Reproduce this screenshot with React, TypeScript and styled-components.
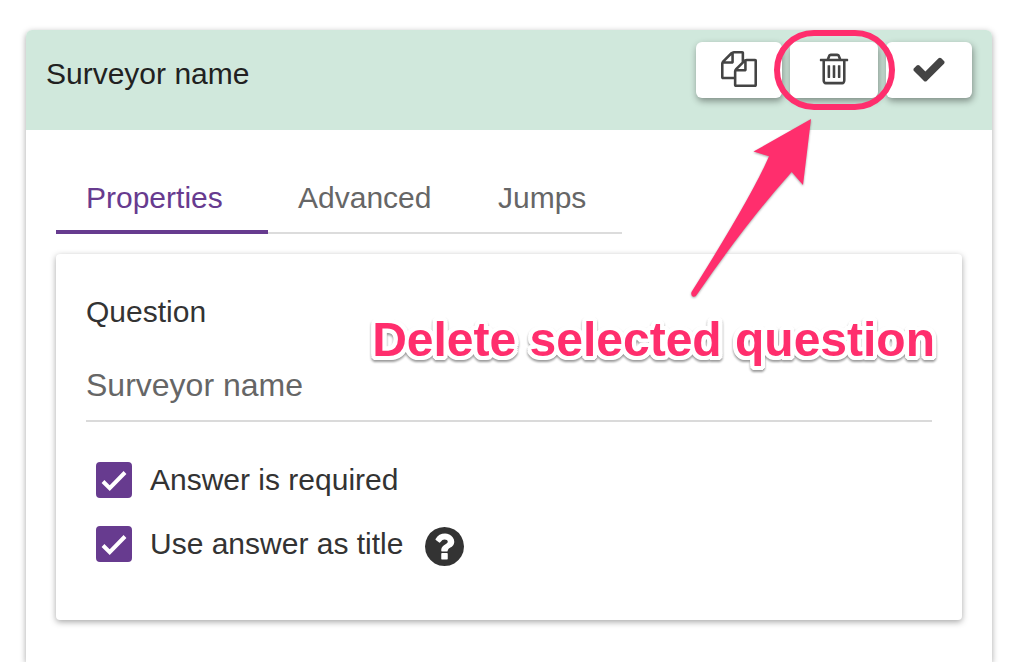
import React, { useState } from 'react';
import styled, { createGlobalStyle } from 'styled-components';

const PURPLE = '#673b8f';
const PINK = '#ff2e6d';

/* White rim with rounded corners, made of shadows spread evenly on a circle. */
const RIM = [
  '4px 0', '-4px 0', '0 4px', '0 -4px',
  '3px 3px', '-3px 3px', '3px -3px', '-3px -3px',
  '4px 2px', '-4px 2px', '4px -2px', '-4px -2px',
  '2px 4px', '-2px 4px', '2px -4px', '-2px -4px',
  '2px 0', '-2px 0', '0 2px', '0 -2px',
]
  .map((offset) => `${offset} 0 #fff`)
  .join(', ');

const GlobalStyle = createGlobalStyle`
  *, *::before, *::after { box-sizing: border-box; }
  body {
    margin: 0;
    background: #fff;
    color: #333;
    font: 30px/36px "Liberation Sans", Arial, sans-serif;
  }
`;

const Page = styled.main`
  display: flex;
  min-height: 100vh;
  padding: 30px 24px 0 26px;
`;

const Card = styled.article`
  position: relative;
  flex: 1;
  min-width: 0;
  border-radius: 6px 6px 0 0;
  background: #fff;
  box-shadow: 0 2px 6px rgba(0, 0, 0, 0.35);
`;

const CardHeader = styled.header`
  display: flex;
  justify-content: space-between;
  align-items: flex-start;
  min-height: 100px;
  padding: 12px 20px;
  border-radius: 6px 6px 0 0;
  background: #d0e8dc;
`;

const Title = styled.h1`
  margin: 14px 0 0;
  color: #212121;
  font-size: 30px;
  line-height: 36px;
  font-weight: 400;
`;

const Toolbar = styled.div`
  display: flex;
  gap: 8px;
`;

const ToolButton = styled.button<{ $wide?: boolean }>`
  display: flex;
  justify-content: center;
  align-items: center;
  width: ${({ $wide }) => ($wide ? 88 : 86)}px;
  height: 56px;
  padding: 0 0 2px;
  border: 0;
  border-radius: 6px;
  background: #fff;
  color: #444;
  box-shadow: 1px 3px 7px rgba(0, 0, 0, 0.4);
  cursor: pointer;
`;

const Icon = styled.svg<{ $size: number }>`
  display: block;
  flex: none;
  width: ${({ $size }) => $size}px;
  height: ${({ $size }) => $size}px;
  fill: currentColor;
`;

const CardBody = styled.div`
  padding: 50px 30px 42px;
`;

const TabList = styled.div`
  display: grid;
  grid-template-columns: 212px 200px 154px;
  width: fit-content;
`;

const Tab = styled.button<{ $active: boolean }>`
  height: 54px;
  padding: 0 0 18px 30px;
  border: 0;
  background: none;
  box-shadow: inset 0 ${({ $active }) => ($active ? `-4px ${PURPLE}` : '-2px #dcdcdc')};
  color: ${({ $active }) => ($active ? PURPLE : '#666')};
  font: inherit;
  text-align: left;
  cursor: pointer;
`;

const Panel = styled.section`
  margin-top: 20px;
  padding: 40px 30px 44px;
  border-radius: 4px;
  background: #fff;
  box-shadow: 0 2px 6px rgba(0, 0, 0, 0.35);
`;

const FieldLabel = styled.label`
  display: block;
`;

const TextField = styled.input`
  display: block;
  width: 100%;
  height: 57px;
  margin: 35px 0 26px;
  padding: 0 0 15px;
  border: 0;
  border-bottom: 2px solid #dadada;
  border-radius: 0;
  outline: 0;
  background: none;
  color: #666;
  font: 32px/40px "Liberation Sans", Arial, sans-serif;
`;

const OptionRow = styled.div`
  display: flex;
  align-items: center;
  height: 64px;
  padding-left: 10px;
`;

const OptionLabel = styled.label`
  display: flex;
  align-items: center;
  gap: 18px;
  cursor: pointer;
`;

const CheckStack = styled.span`
  display: grid;
  width: 36px;
  height: 36px;

  > * {
    grid-area: 1 / 1;
  }
`;

const CheckInput = styled.input`
  appearance: none;
  width: 36px;
  height: 36px;
  margin: 0;
  border: 3px solid ${PURPLE};
  border-radius: 4px;
  cursor: pointer;

  &:checked {
    background: ${PURPLE};
  }
`;

const CheckMark = styled.svg`
  width: 36px;
  height: 36px;
  fill: none;
  stroke: #fff;
  stroke-width: 4;
  pointer-events: none;
`;

const HelpButton = styled.button`
  margin: 4px 0 0 22px;
  padding: 0;
  border: 0;
  background: none;
  color: #333;
  cursor: pointer;
`;

const Highlight = styled.div`
  position: absolute;
  top: 0;
  right: 97px;
  width: 121px;
  height: 80px;
  border: 6px solid ${PINK};
  border-radius: 40px;
  pointer-events: none;
`;

const Arrow = styled.svg`
  position: absolute;
  top: 80px;
  right: 172px;
  width: 140px;
  height: 200px;
  fill: ${PINK};
  filter: drop-shadow(0 1px 1px rgba(0, 0, 0, 0.35));
  pointer-events: none;
`;

const Callout = styled.p`
  position: absolute;
  top: 282px;
  right: 57px;
  margin: 0;
  color: ${PINK};
  font-size: 48px;
  line-height: 56px;
  font-weight: 700;
  white-space: nowrap;
  text-shadow: ${RIM};
  filter: drop-shadow(0 2px 1px rgba(0, 0, 0, 0.4));
  pointer-events: none;
`;

const TABS = ['Properties', 'Advanced', 'Jumps'];

function Option({ label, children }: { label: string; children?: React.ReactNode }) {
  const [on, setOn] = useState(true);
  return (
    <OptionRow>
      <OptionLabel>
        <CheckStack>
          <CheckInput type="checkbox" checked={on} onChange={() => setOn(!on)} />
          {on && (
            <CheckMark viewBox="0 0 36 36" aria-hidden="true">
              <path d="M7 19.5L13.7 26.2L29 10.5" />
            </CheckMark>
          )}
        </CheckStack>
        {label}
      </OptionLabel>
      {children}
    </OptionRow>
  );
}

export default function App() {
  const [tab, setTab] = useState(TABS[0]);
  const [question, setQuestion] = useState('Surveyor name');

  return (
    <>
      <GlobalStyle />
      <Page>
        <Card>
          <CardHeader>
            <Title>{question}</Title>
            <Toolbar>
              <ToolButton type="button" aria-label="Duplicate">
                <Icon $size={36} viewBox="0 0 1792 1792">
                  <path d="M1696 384q40 0 68 28t28 68v1216q0 40-28 68t-68 28h-960q-40 0-68-28t-28-68v-288h-544q-40 0-68-28t-28-68v-672q0-40 20-88t48-76l408-408q28-28 76-48t88-20h416q40 0 68 28t28 68v328q68-40 128-40h416zm-544 213l-299 299h299v-299zm-640-384l-299 299h299v-299zm196 647l316-316v-416h-384v416q0 40-28 68t-68 28h-416v640h512v-256q0-40 20-88t48-76zm956 804v-1152h-384v416q0 40-28 68t-68 28h-416v640h896z" />
                </Icon>
              </ToolButton>
              <ToolButton type="button" aria-label="Delete" $wide>
                <Icon $size={36} viewBox="0 0 1792 1792">
                  <path d="M704 736v576q0 14-9 23t-23 9h-64q-14 0-23-9t-9-23v-576q0-14 9-23t23-9h64q14 0 23 9t9 23zm256 0v576q0 14-9 23t-23 9h-64q-14 0-23-9t-9-23v-576q0-14 9-23t23-9h64q14 0 23 9t9 23zm256 0v576q0 14-9 23t-23 9h-64q-14 0-23-9t-9-23v-576q0-14 9-23t23-9h64q14 0 23 9t9 23zm128 724v-948h-896v948q0 22 7 40.5t14.5 27 10.5 8.5h832q3 0 10.5-8.5t14.5-27 7-40.5zm-672-1076h448l-48-117q-7-9-17-11h-317q-10 2-17 11zm928 32v64q0 14-9 23t-23 9h-96v948q0 83-47 143.5t-113 60.5h-832q-66 0-113-58.5t-47-141.5v-952h-96q-14 0-23-9t-9-23v-64q0-14 9-23t23-9h309l70-167q15-37 54-63t79-26h320q40 0 79 26t54 63l70 167h309q14 0 23 9t9 23z" />
                </Icon>
              </ToolButton>
              <ToolButton type="button" aria-label="Done">
                <Icon $size={36} viewBox="0 0 1792 1792">
                  <path d="M1671 566q0 40-28 68l-724 724-136 136q-28 28-68 28t-68-28l-136-136-362-362q-28-28-28-68t28-68l136-136q28-28 68-28t68 28l294 295 656-657q28-28 68-28t68 28l136 136q28 28 28 68z" />
                </Icon>
              </ToolButton>
            </Toolbar>
          </CardHeader>

          <CardBody>
            <TabList role="tablist">
              {TABS.map((name) => (
                <Tab
                  key={name}
                  type="button"
                  role="tab"
                  aria-selected={name === tab}
                  $active={name === tab}
                  onClick={() => setTab(name)}
                >
                  {name}
                </Tab>
              ))}
            </TabList>

            <Panel role="tabpanel">
              <FieldLabel htmlFor="question">Question</FieldLabel>
              <TextField
                id="question"
                type="text"
                value={question}
                onChange={(e) => setQuestion(e.target.value)}
              />
              <Option label="Answer is required" />
              <Option label="Use answer as title">
                <HelpButton type="button" aria-label="Help">
                  <Icon $size={39} viewBox="128 128 1536 1536">
                    <path d="M1024 1376v-192q0-14-9-23t-23-9h-192q-14 0-23 9t-9 23v192q0 14 9 23t23 9h192q14 0 23-9t9-23zm256-672q0-88-55.5-163t-138.5-116-170-41q-243 0-371 213-15 24 8 42l132 100q7 6 19 6 16 0 25-12 53-68 86-92 34-24 86-24 48 0 85.5 26t37.5 59q0 38-20 61t-68 45q-63 28-115.5 86.5t-52.5 125.5v36q0 14 9 23t23 9h192q14 0 23-9t9-23q0-19 21.5-49.5t54.5-49.5q32-18 49-28.5t46-35 44.5-48 28-60.5 12.5-81zm384 192q0 209-103 385.5t-279.5 279.5-385.5 103-385.5-103-279.5-279.5-103-385.5 103-385.5 279.5-279.5 385.5-103 385.5 103 279.5 279.5 103 385.5z" />
                  </Icon>
                </HelpButton>
              </Option>
            </Panel>
          </CardBody>

          <Highlight />
          <Arrow viewBox="0 0 140 200" aria-hidden="true">
            <path d="M131 9L73.500 41.600L89 46.300Q72 86 11.500 182Q10.500 185.500 13 186.700Q15.500 187.300 17 184.500Q66 113 111.700 62L123 75Z" />
          </Arrow>
          <Callout>Delete selected question</Callout>
        </Card>
      </Page>
    </>
  );
}
